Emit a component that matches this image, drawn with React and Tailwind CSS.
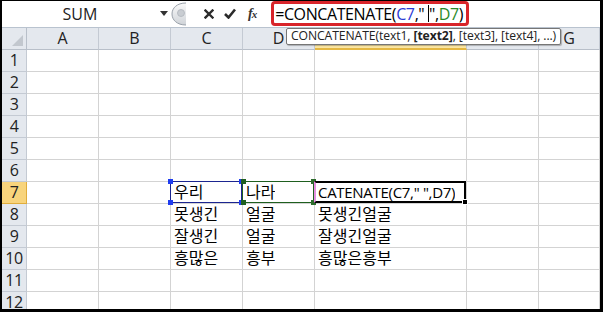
import React from "react";

const FONT = { fontFamily: '"Open Sans", "Noto Sans CJK KR", sans-serif' };

// 열 너비 (A~G), E/F 머리글은 툴팁에 가려짐
const COLS = [
  { key: "A", w: "w-[72px]", label: "A" },
  { key: "B", w: "w-[72px]", label: "B" },
  { key: "C", w: "w-[72px]", label: "C" },
  { key: "D", w: "w-[72px]", label: "D" },
  { key: "E", w: "w-[152px]", label: "" },
  { key: "F", w: "w-[72px]", label: "" },
  { key: "G", w: "flex-1", label: "G" },
];

const DATA = {
  7: { C: "우리", D: "나라", E: 'CATENATE(C7," ",D7)' },
  8: { C: "못생긴", D: "얼굴", E: "못생긴얼굴" },
  9: { C: "잘생긴", D: "얼굴", E: "잘생긴얼굴" },
  10: { C: "흥많은", D: "흥부", E: "흥많은흥부" },
};

function Handle({ pos, color }) {
  return <span className={`absolute w-[5px] h-[5px] ${pos} ${color}`} />;
}

function Selection({ col }) {
  if (col === "C") {
    return (
      <div className="absolute -left-px -top-px right-0 bottom-0 z-10 border border-[#1b2590]">
        <Handle pos="-left-[3px] -top-[3px]" color="bg-[#1f3cf0]" />
        <Handle pos="-left-[3px] -bottom-[3px]" color="bg-[#1f3cf0]" />
        <Handle pos="-right-[3px] -top-[3px]" color="bg-[#1f3cf0]" />
        <Handle pos="-right-[3px] -bottom-[3px]" color="bg-[#1f3cf0]" />
      </div>
    );
  }
  if (col === "D") {
    return (
      <div className="absolute -left-px -top-px right-0 bottom-0 z-10 border border-[#1f5f1f]">
        <Handle pos="-left-[2px] -top-[3px] w-[3px]" color="bg-[#1f5f1f]" />
        <Handle pos="-left-[2px] -bottom-[3px] w-[3px]" color="bg-[#1f5f1f]" />
        <Handle pos="-right-[3px] -top-[3px]" color="bg-[#2d6b2d]" />
        <Handle pos="-right-[3px] -bottom-[3px]" color="bg-[#2d6b2d]" />
      </div>
    );
  }
  if (col === "E") {
    return (
      <div className="absolute -left-px -top-px right-0 bottom-0 z-20 border-2 border-black border-l-[#e58ee0]">
        <span className="absolute -right-[4px] -bottom-[4px] w-[6px] h-[6px] bg-black border border-white" />
      </div>
    );
  }
  return null;
}

function FormulaBar() {
  return (
    <div className="flex items-center h-[27px] border-b border-[#b9c3cf] bg-white">
      <div className="w-[156px] text-center text-[16px] text-[#222]">SUM</div>
      <svg width="8" height="5" viewBox="0 0 8 5" className="ml-[2px]">
        <path d="M0 0 H8 L4 5 Z" fill="#333" />
      </svg>
      {/* 구분 버튼 */}
      <svg width="16" height="24" viewBox="0 0 16 24" className="ml-[3px]">
        <defs>
          <linearGradient id="g1" x1="0" y1="0" x2="0" y2="1">
            <stop offset="0" stopColor="#fafafa" />
            <stop offset="1" stopColor="#cfd3d8" />
          </linearGradient>
        </defs>
        <path d="M15 1 C6 1 1 6 1 12 C1 18 6 23 15 23" fill="url(#g1)" stroke="#9aa1aa" strokeWidth="1" />
        <circle cx="10" cy="11" r="3.5" fill="#c9cdd2" stroke="#b0b5bb" strokeWidth="0.8" />
      </svg>
      <svg width="10" height="10" viewBox="0 0 10 10" className="ml-[17px]">
        <path d="M1.5 1.5 L8.5 8.5 M8.5 1.5 L1.5 8.5" stroke="#2b2b2b" strokeWidth="2.4" strokeLinecap="square" />
      </svg>
      <svg width="12" height="11" viewBox="0 0 12 11" className="ml-[10px]">
        <path d="M1 6 L4.5 9.5 L11 1.5" stroke="#2b2b2b" strokeWidth="2.6" fill="none" />
      </svg>
      <span
        className="ml-[12px] text-[14px] font-bold italic text-[#333] leading-none tracking-[-1px]"
        style={{ fontFamily: '"Liberation Serif", serif' }}
      >
        f<span className="text-[11px]">x</span>
      </span>
      <div className="ml-[15px] h-[25px] w-[198px] rounded-[4px] border-[3px] border-[#d8242a] flex items-center pl-[1px] text-[16px] leading-none whitespace-nowrap tracking-[-0.4px]">
        <span>=CONCATENATE(</span>
        <span className="text-[#2b3bd6]">C7</span>
        <span>,"&nbsp;</span>
        <span className="w-px h-[17px] bg-black" />
        <span>",</span>
        <span className="text-[#2a8a2a]">D7</span>
        <span>)</span>
      </div>
    </div>
  );
}

function HeaderRow() {
  return (
    <div className="flex h-[22px]">
      <div className="w-[25px] shrink-0 border-r border-b border-[#b8bfc9] bg-[#e4e8ee] flex items-end justify-end">
        <svg width="11" height="11" viewBox="0 0 11 11" className="mr-[3px] mb-[3px]">
          <path d="M11 0 L11 11 L0 11 Z" fill="#c2c7ce" />
        </svg>
      </div>
      {COLS.map((c) => (
        <div
          key={c.key}
          className={`${c.w} shrink-0 border-r border-[#c4cad3] flex items-center justify-center text-[16px] text-[#222] ${
            c.key === "E"
              ? "bg-[#fbe6a2] border-b-2 border-b-[#e5b843]"
              : "bg-[#e4e8ee] border-b border-b-[#b8bfc9]"
          }`}
        >
          {c.label}
        </div>
      ))}
    </div>
  );
}

function Row({ n }) {
  const row = DATA[n] || {};
  const active = n === 7;
  return (
    <div className="flex h-[22px] shrink-0">
      <div
        className={`w-[25px] shrink-0 border-r border-b flex items-center justify-center text-[16px] text-[#222] tracking-[-0.5px] ${
          active ? "bg-[#f8d47c] border-[#e0ad3c]" : "bg-[#e4e8ee] border-[#c4cad3]"
        }`}
      >
        {n}
      </div>
      {COLS.map((c) => (
        <div
          key={c.key}
          className={`${c.w} shrink-0 relative border-r border-b border-[#d3d3d3] bg-white flex items-center pl-[3px] text-black whitespace-nowrap ${
            active && c.key === "E" ? "text-[15px] tracking-[-0.3px]" : "text-[16px]"
          }`}
        >
          <span className="overflow-hidden">{row[c.key]}</span>
          {active && <Selection col={c.key} />}
        </div>
      ))}
    </div>
  );
}

export default function App() {
  const rows = [1, 2, 3, 4, 5, 6, 7, 8, 9, 10, 11, 12];
  return (
    <div
      className="relative w-[603px] h-[312px] overflow-hidden bg-white border-l-2 border-t border-r-[3px] border-b-[3px] border-black flex flex-col"
      style={FONT}
    >
      <FormulaBar />
      <HeaderRow />
      <div className="flex flex-col overflow-hidden">
        {rows.map((n) => (
          <Row key={n} n={n} />
        ))}
      </div>
      {/* 함수 도움말 툴팁 */}
      <div className="absolute left-[284px] top-[27px] h-[17px] px-[4px] z-30 bg-white border border-[#767676] rounded-[2px] shadow-[1px_1px_1px_rgba(0,0,0,0.25)] flex items-center text-[12.2px] leading-none text-[#222] whitespace-nowrap tracking-[-0.1px]">
        CONCATENATE(text1,&nbsp;<b>[text2]</b>, [text3], [text4], ...)
      </div>
    </div>
  );
}
